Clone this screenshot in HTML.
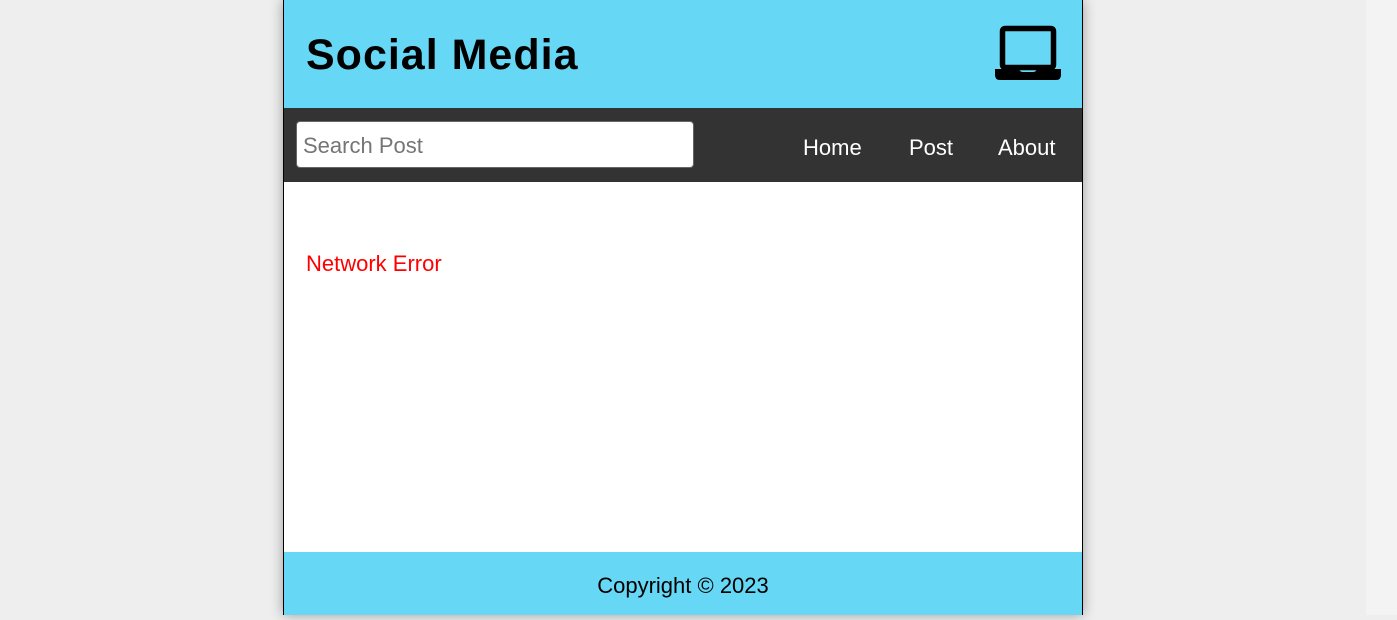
<!DOCTYPE html>
<html><head><style>
html,body{margin:0;padding:0;width:1397px;height:615px;overflow:hidden;background:#eeeeee;font-family:"Liberation Sans",sans-serif;}
.sb{position:absolute;left:1366px;top:0;width:31px;height:615px;background:#f2f3f2;}
.c{position:absolute;left:283px;top:0;width:798px;height:615px;border-left:1px solid #000;border-right:1px solid #000;background:#fff;box-shadow:0 0 12px rgba(0,0,0,.35);}
.h{height:108px;background:#66d7f5;position:relative;}
.h h1{margin:0;position:absolute;left:22px;top:29px;font-size:43px;line-height:52px;font-weight:bold;color:#000;letter-spacing:1px;}
.h svg{position:absolute;left:710px;top:25px;}
.n{height:74px;background:#333;position:relative;}
.n .s{position:absolute;left:12px;top:13px;width:398px;height:47px;background:#fff;border:1px solid #666;border-radius:4px;box-sizing:border-box;font-size:22px;color:#757575;padding:12px 6px;line-height:24px;}
.n a{position:absolute;top:27px;color:#fff;font-size:22px;line-height:26px;text-decoration:none;}
.m{height:370px;position:relative;}
.m p{position:absolute;left:22px;top:69px;margin:0;color:#f00;font-size:22px;}
.f{height:63px;background:#66d7f5;text-align:center;font-size:22px;line-height:68px;color:#000;}
</style></head><body>
<div class="sb"></div>
<div class="c">
<div class="h"><h1>Social Media</h1>
<svg width="68" height="56" viewBox="0 0 68 56"><rect x="8.5" y="3.5" width="51" height="39" rx="2.5" fill="none" stroke="#000" stroke-width="5.5"/><path d="M1 44H25Q26 47 29 47H39Q42 47 43 44H67V50Q67 55 62 55H6Q1 55 1 50Z" fill="#000"/></svg>
</div>
<div class="n"><div class="s">Search Post</div>
<a style="left:519px">Home</a><a style="left:625px">Post</a><a style="left:714px">About</a></div>
<div class="m"><p>Network Error</p></div>
<div class="f">Copyright © 2023</div>
</div>
</body></html>
